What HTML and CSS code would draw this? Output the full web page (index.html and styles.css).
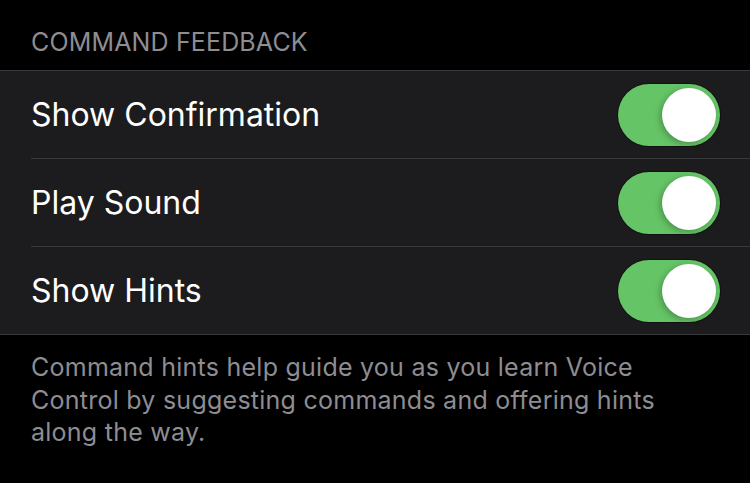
FILE: index.html
```html
<!DOCTYPE html>
<html>
<head>
<meta charset="utf-8">
<link rel="stylesheet" href="styles.css">
</head>
<body>
<div class="page">
  <div class="section-header">COMMAND FEEDBACK</div>
  <div class="group">
    <div class="row">
      <span class="label">Show Confirmation</span>
      <span class="toggle on"><span class="knob"></span></span>
    </div>
    <div class="row">
      <span class="label">Play Sound</span>
      <span class="toggle on"><span class="knob"></span></span>
    </div>
    <div class="row">
      <span class="label">Show Hints</span>
      <span class="toggle on"><span class="knob"></span></span>
    </div>
  </div>
  <div class="footer">Command hints help guide you as you learn Voice Control by suggesting commands and offering hints along the way.</div>
</div>
</body>
</html>
```
FILE: styles.css
```css
html, body {
  margin: 0;
  padding: 0;
  background: #000;
}
.page {
  width: 750px;
  height: 483px;
  overflow: hidden;
  font-family: Inter, "Noto Sans", "Liberation Sans", sans-serif;
  -webkit-font-smoothing: antialiased;
}
.section-header {
  color: #8d8d92;
  font-size: 25px;
  line-height: 30px;
  letter-spacing: 0.15px;
  padding: 27px 0 0 31px;
  height: 70px;
  box-sizing: border-box;
}
.group {
  background: #1c1c1e;
  border-top: 1px solid #38383a;
  border-bottom: 1px solid #38383a;
}
.row {
  display: flex;
  align-items: center;
  justify-content: space-between;
  height: 87px;
  margin-left: 31px;
  padding-right: 30px;
  border-bottom: 1px solid #38383a;
}
.row:last-child {
  border-bottom: none;
}
.label {
  color: #fff;
  font-size: 32px;
}
.toggle {
  position: relative;
  width: 102px;
  height: 62px;
  border-radius: 31px;
  background: #65c466;
  box-sizing: border-box;
  box-shadow: 0 0 0 1px rgba(0,0,0,0.35);
}
.knob {
  position: absolute;
  top: 4px;
  right: 4px;
  width: 54px;
  height: 54px;
  border-radius: 50%;
  background: #fff;
  box-shadow: -2px 2px 6px rgba(0,0,0,0.25);
}
.footer {
  color: #8d8d92;
  font-size: 25px;
  line-height: 32.5px;
  letter-spacing: 0.25px;
  padding: 16px 60px 0 31px;
}
```
